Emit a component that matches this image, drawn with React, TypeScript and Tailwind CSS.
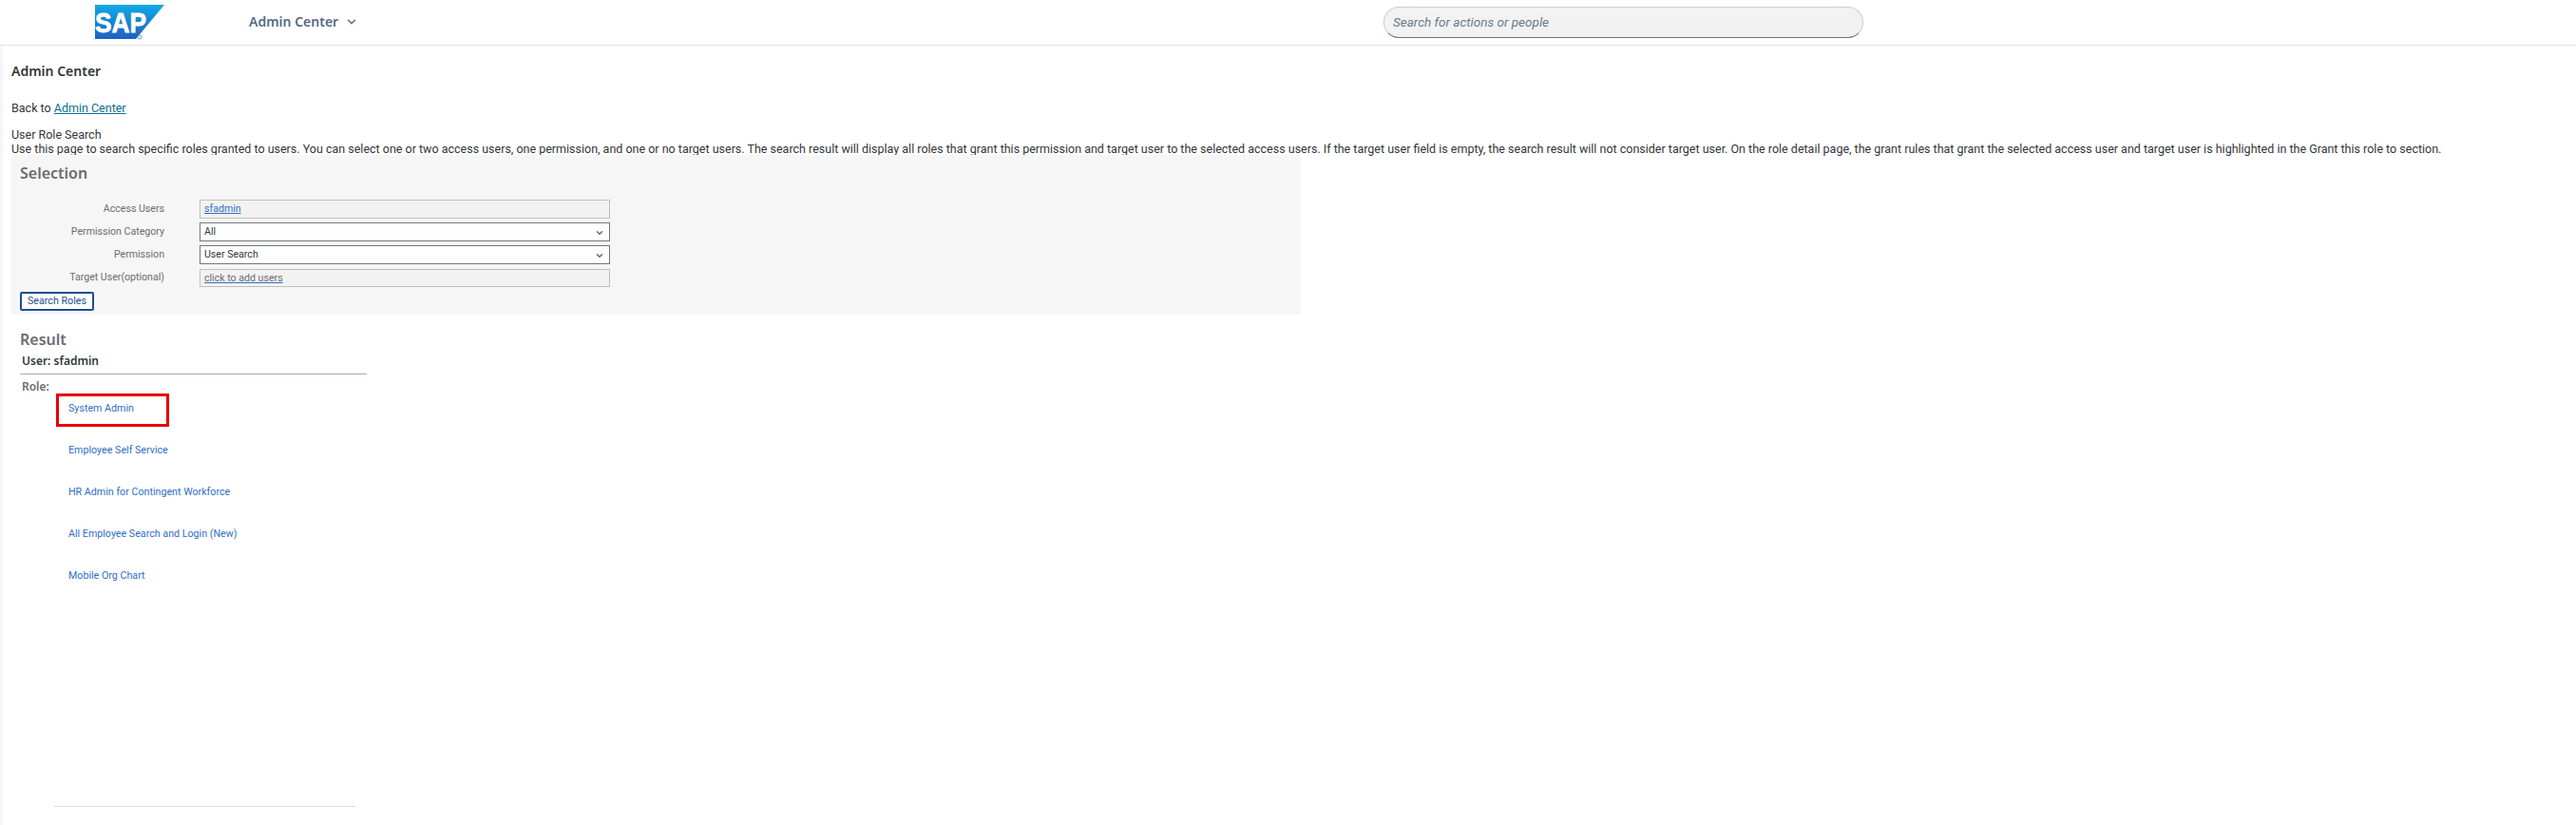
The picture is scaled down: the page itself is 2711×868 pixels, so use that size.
import React from 'react';
import { ChevronDown } from 'lucide-react';

const ROLES = [
  'System Admin',
  'Employee Self Service',
  'HR Admin for Contingent Workforce',
  'All Employee Search and Login (New)',
  'Mobile Org Chart',
];

const SapLogo = () => (
  <svg width="73" height="38" viewBox="0 0 73 38" className="block">
    <defs>
      <linearGradient id="sapGrad" x1="0" y1="0" x2="0" y2="1">
        <stop offset="0" stopColor="#0fa9e6" />
        <stop offset="1" stopColor="#1f62bd" />
      </linearGradient>
    </defs>
    <polygon points="0,0 73,0 43,36 0,36" fill="url(#sapGrad)" />
    <text x="0" y="29" fill="#fff" stroke="#fff" strokeWidth="0.8" fontFamily="'Liberation Sans', sans-serif" fontWeight="700" fontSize="30" textLength="54" lengthAdjust="spacingAndGlyphs">SAP</text>
    <circle cx="47" cy="34" r="2" fill="none" stroke="#6d9fd6" strokeWidth="1" />
  </svg>
);

const Label = ({ children }: { children: React.ReactNode }) => (
  <div className="w-[161px] text-right text-[#6a6d70] text-[10.6px] leading-none">{children}</div>
);

const SelectField = ({ value }: { value: string }) => (
  <div className="relative w-[432px] h-[20px]">
    <select defaultValue={value} className="block w-full h-full appearance-none bg-white border border-[#74777a] pl-[4px] text-[10.6px] text-[#32363a] outline-none rounded-none">
      <option>{value}</option>
    </select>
    <ChevronDown size={10} strokeWidth={3.5} className="absolute right-[6px] top-[6px] text-[#5a6a7a] pointer-events-none" />
  </div>
);

export default function App() {
  return (
    <div className="w-[2711px] h-[868px] overflow-hidden bg-white flex flex-col text-[#32363a] font-['Roboto',sans-serif]">
      {/* header */}
      <header className="h-[48px] shrink-0 border-b border-[#e5e5e5] flex items-start font-['Noto_Sans',sans-serif]">
        <div className="ml-[100px] mt-[5px] w-[73px]">
          <SapLogo />
        </div>
        <div className="ml-[89px] mt-[14px] w-[120px] flex items-center gap-[7px] text-[#556b82] text-[14px] font-semibold leading-[18px]">
          <span>Admin Center</span>
          <ChevronDown size={14} strokeWidth={2.5} />
        </div>
        <div className="ml-[1074px] mt-[7px] w-[505px] h-[33px] bg-[#f2f2f2] border border-[#c9ced3] border-b-[#5b738b] rounded-[16px] flex items-center pl-[9px] font-['Roboto',sans-serif] text-[13.5px] italic text-[#6a7a8a]">
          Search for actions or people
        </div>
      </header>

      <div className="flex-1 flex">
        <div className="w-[3px] bg-[#f3f5f9]" />
        <main className="flex-1 pl-[9px] flex flex-col">
          <h1 className="mt-[18px] font-['Noto_Sans',sans-serif] text-[14px] font-semibold leading-[18px]">Admin Center</h1>
          <p className="mt-[21px] text-[12.5px] leading-[18px]">
            Back to <a className="underline text-[#0a6e8f]">Admin Center</a>
          </p>
          <p className="mt-[11px] text-[12.5px] leading-[15px]">User Role Search</p>
          <p className="text-[12.5px] leading-[15px] whitespace-nowrap">
            Use this page to search specific roles granted to users. You can select one or two access users, one permission, and one or no target users. The search result will display all roles that grant this permission and target user to the selected access users. If the target user field is empty, the search result will not consider target user. On the role detail page, the grant rules that grant the selected access user and target user is highlighted in the Grant this role to section.
          </p>

          {/* selection panel */}
          <section className="-mt-[1px] w-[1357px] h-[168px] shrink-0 bg-[#f6f6f6] pt-[9px]">
            <h2 className="pl-[9px] font-['Noto_Sans',sans-serif] text-[16px] font-semibold leading-[20px] text-[#6a6d70]">Selection</h2>
            <div className="mt-[18px] flex flex-col">
              <div className="flex items-center gap-[37px]">
                <Label>Access Users</Label>
                <div className="w-[432px] h-[20px] bg-[#f2f2f2] border border-[#bfbfbf] pl-[4px] flex items-center text-[10.6px]">
                  <a className="underline text-[#2f6fc4]">sfadmin</a>
                </div>
              </div>
              <div className="flex items-center gap-[37px] mt-[4px]">
                <Label>Permission Category</Label>
                <SelectField value="All" />
              </div>
              <div className="flex items-center gap-[37px] mt-[4px]">
                <Label>Permission</Label>
                <SelectField value="User Search" />
              </div>
              <div className="flex items-center gap-[37px] mt-[5px]">
                <Label>Target User(optional)</Label>
                <div className="w-[432px] h-[19px] bg-[#f2f2f2] border border-[#bfbfbf] pl-[4px] flex items-center text-[10.6px]">
                  <a className="underline decoration-[#2f6fc4] text-[#6a6d70]">click to add users</a>
                </div>
              </div>
              <button className="ml-[9px] mt-[5px] w-[78px] h-[20px] bg-white border-2 border-[#1d4f91] rounded-[2px] text-[10.7px] leading-none text-[#1d4f91]">Search Roles</button>
            </div>
          </section>

          {/* result */}
          <section className="mt-[16px] pl-[9px] w-[374px] font-['Noto_Sans',sans-serif]">
            <h2 className="text-[16px] font-semibold leading-[20px] text-[#6a6d70]">Result</h2>
            <div className="pl-[2px] mt-[4px] pb-[4px] text-[12px] font-semibold leading-[18px] border-b border-[#a9a9a9]">User: sfadmin</div>
            <div className="pl-[2px] mt-[4px] text-[12px] font-semibold leading-[18px] text-[#6a6d70]">Role:</div>
            <ul className="ml-[51px] -mt-[2px] font-['Roboto',sans-serif]">
              {ROLES.map((r) => (
                <li key={r} className="h-[44px]">
                  <a className="block pt-[8px] text-[10.7px] leading-[16px] text-[#2f6fc4]">{r}</a>
                </li>
              ))}
            </ul>
          </section>
          {/* footer rule */}
          <div className="ml-[45px] mt-[214px] w-[317px] h-[1px] bg-[#dcdcdc]" />
          {/* red callout */}
          <div className="absolute left-[59px] top-[414px] w-[119px] h-[35px] border-[3px] border-[#e60000] pointer-events-none" />
        </main>
      </div>
    </div>
  );
}
